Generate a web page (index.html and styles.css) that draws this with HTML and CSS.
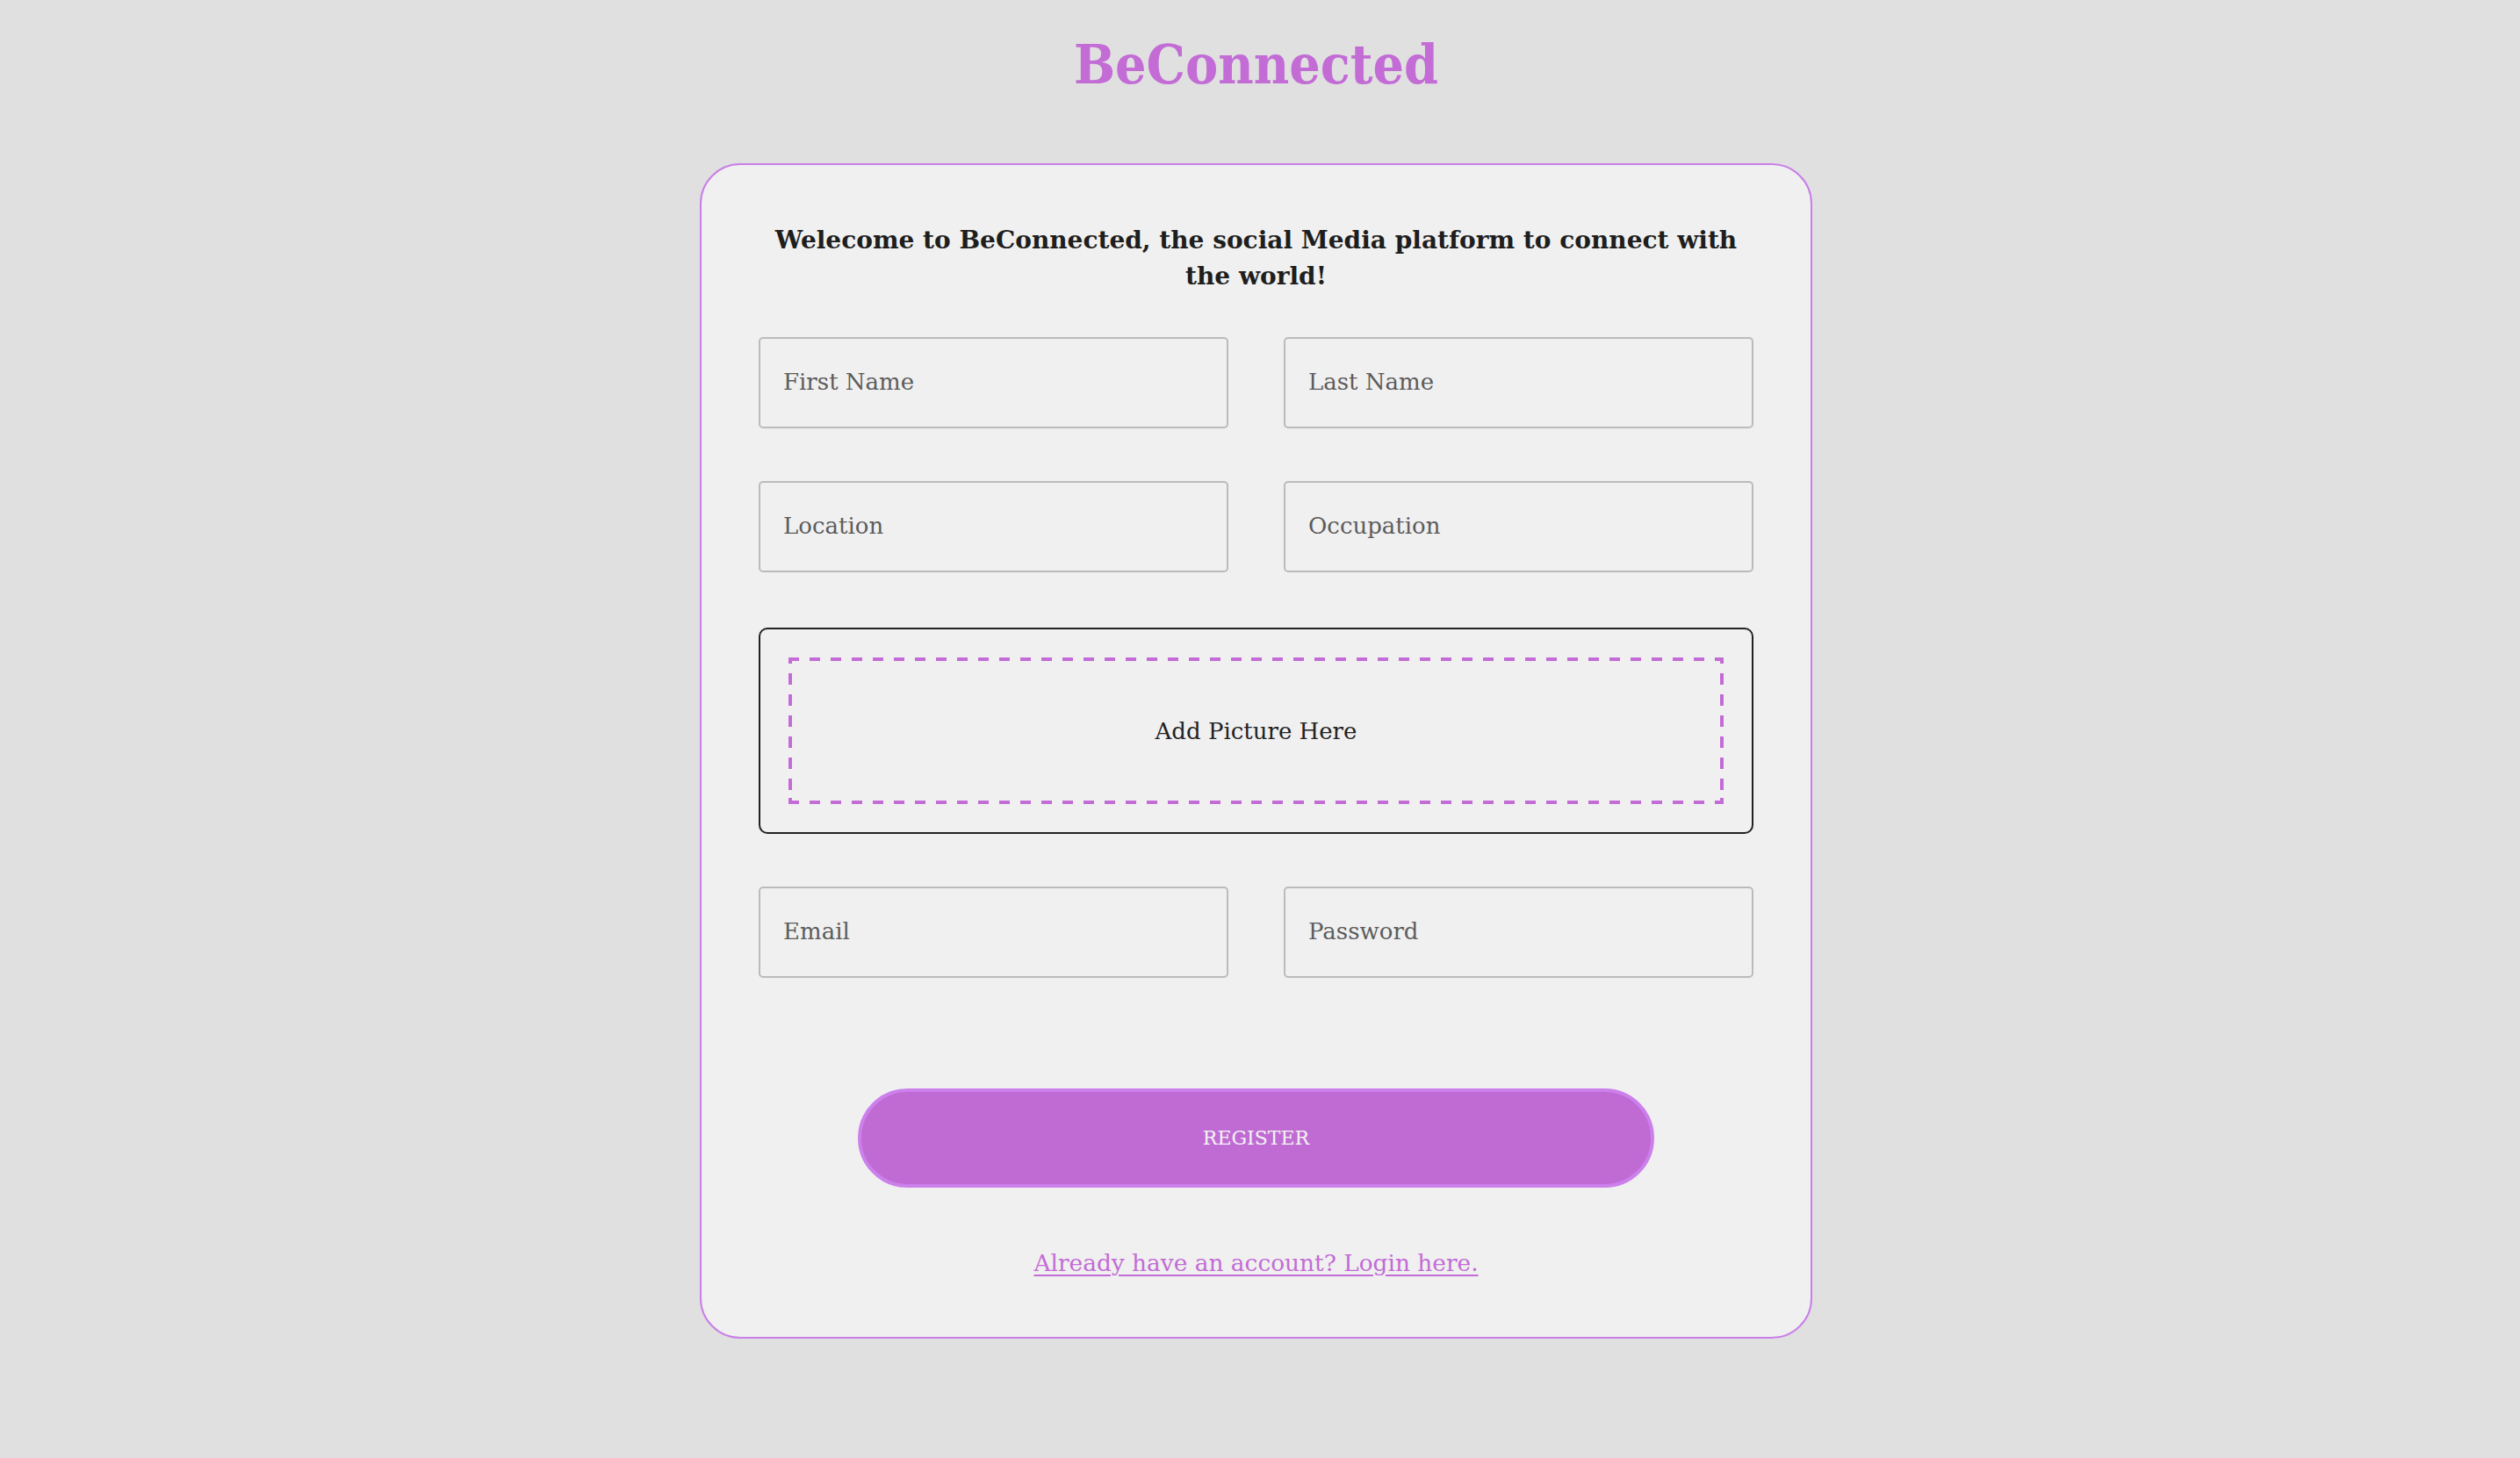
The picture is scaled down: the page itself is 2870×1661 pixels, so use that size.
FILE: index.html
```html
<!DOCTYPE html>
<html lang="en">
<head>
<meta charset="utf-8">
<title>BeConnected</title>
<link rel="stylesheet" href="styles.css">
</head>
<body>
<div class="page">
  <header class="brand">
    <h1 class="brand-title">BeConnected</h1>
  </header>
  <main class="card">
    <h2 class="welcome">Welecome to BeConnected, the social Media platform to connect with the world!</h2>
    <form class="form">
      <div class="row">
        <input class="field" type="text" placeholder="First Name">
        <input class="field" type="text" placeholder="Last Name">
      </div>
      <div class="row">
        <input class="field" type="text" placeholder="Location">
        <input class="field" type="text" placeholder="Occupation">
      </div>
      <div class="dropzone">
        <div class="dropzone-inner">Add Picture Here</div>
      </div>
      <div class="row">
        <input class="field" type="email" placeholder="Email">
        <input class="field" type="password" placeholder="Password">
      </div>
      <button class="register" type="button">REGISTER</button>
      <a class="login-link" href="#">Already have an account? Login here.</a>
    </form>
  </main>
</div>
</body>
</html>
```

FILE: styles.css
```css
html, body {
  margin: 0;
  padding: 0;
  background: #e0e0e0;
}

body {
  font-family: "DejaVu Serif", "Liberation Serif", serif;
  color: #222222;
}

.page {
  width: 2861px;
  display: flex;
  flex-direction: column;
  align-items: center;
}

.brand {
  height: 186px;
  display: flex;
  justify-content: center;
}

.brand-title {
  margin: 0;
  margin-top: 43px;
  font-size: 62px;
  line-height: 1;
  font-weight: 700;
  font-stretch: condensed;
  color: #c36cd6;
  height: 70px;
}

.card {
  box-sizing: border-box;
  width: 1267px;
  background: #f0f0f0;
  border: 2px solid #c97fe8;
  border-radius: 46px;
  padding: 65px 65px 64px;
}

.welcome {
  margin: 0;
  text-align: center;
  font-size: 28px;
  line-height: 41px;
  font-weight: 700;
  color: #1e1e1e;
}

.form {
  display: flex;
  flex-direction: column;
  margin-top: 49px;
}

.row {
  display: grid;
  grid-template-columns: 1fr 1fr;
  column-gap: 63px;
  margin-bottom: 60px;
}

.row:nth-of-type(2) {
  margin-bottom: 63px;
}

.field {
  box-sizing: border-box;
  height: 104px;
  width: 100%;
  margin: 0;
  padding: 0 26px 3px;
  border: 2px solid #bbbbbb;
  border-radius: 5px;
  background: #f0f0f0;
  font-family: "DejaVu Serif", "Liberation Serif", serif;
  font-size: 26px;
  color: #333333;
}

.field::placeholder {
  color: #5c5c5c;
  opacity: 1;
}

.dropzone {
  box-sizing: border-box;
  height: 235px;
  border: 2px solid #222222;
  border-radius: 10px;
  padding: 32px;
  margin-bottom: 60px;
}

.dropzone-inner {
  box-sizing: border-box;
  height: 100%;
  display: flex;
  align-items: center;
  justify-content: center;
  font-size: 26px;
  color: #222222;
  background:
    linear-gradient(#c36cd6, #c36cd6) 0 0 / 4px 7px no-repeat,
    linear-gradient(#c36cd6, #c36cd6) 100% 0 / 4px 7px no-repeat,
    linear-gradient(#c36cd6, #c36cd6) 0 100% / 4px 7px no-repeat,
    linear-gradient(#c36cd6, #c36cd6) 100% 100% / 4px 7px no-repeat,
    repeating-linear-gradient(to right, #c36cd6 0 12px, transparent 12px 23.977px) 0 0 / 100% 4px no-repeat,
    repeating-linear-gradient(to right, #c36cd6 0 12px, transparent 12px 23.977px) 0 100% / 100% 4px no-repeat,
    repeating-linear-gradient(to bottom, #c36cd6 0 12.6px, transparent 12.6px 24px) 0 17.7px / 4px 133px no-repeat,
    repeating-linear-gradient(to bottom, #c36cd6 0 12.6px, transparent 12.6px 24px) 100% 17.7px / 4px 133px no-repeat;
}

.row:last-of-type {
  margin-bottom: 0;
}

.register {
  align-self: center;
  box-sizing: border-box;
  width: 907px;
  height: 113px;
  margin-top: 126px;
  border: 4px solid #cc80ec;
  border-radius: 57px;
  background: #c06bd4;
  color: #f2f2f2;
  font-family: "DejaVu Serif", "Liberation Serif", serif;
  font-size: 22px;
  letter-spacing: 0;
  cursor: pointer;
}

.login-link {
  align-self: center;
  margin-top: 66px;
  font-size: 26.4px;
  line-height: 40px;
  color: #c36cd6;
  text-decoration: underline;
  text-underline-offset: 4px;
  text-decoration-thickness: 2px;
}
```
